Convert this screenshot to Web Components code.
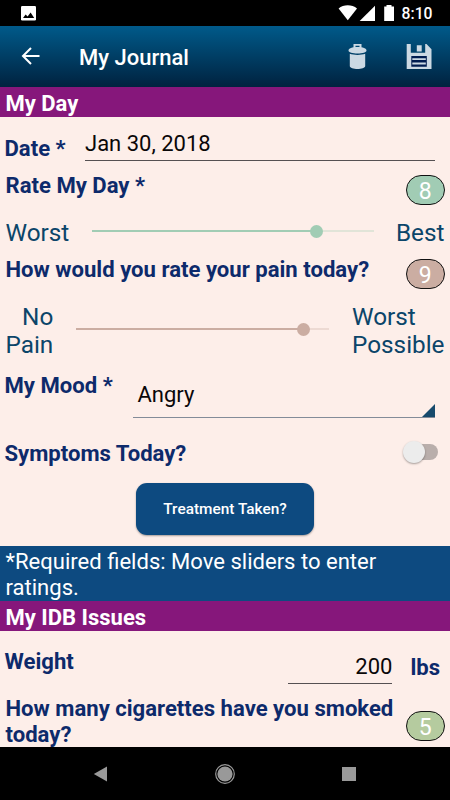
<!DOCTYPE html>
<html lang="en">
<head>
<meta charset="utf-8">
<title>My Journal</title>
<style>
    body {
        margin: 0;
        width: 450px;
        height: 800px;
        overflow: hidden;
        background: #000;
        font-family: Roboto, sans-serif;
    }
</style>
</head>
<body>
<journal-screen></journal-screen>

<script>
function define(name, html) {
    const template = document.createElement('template')
    template.innerHTML = html
    customElements.define(name, class extends HTMLElement {
        constructor() {
            super()
            this.attachShadow({ mode: 'open' })
            this.shadowRoot.appendChild(template.content.cloneNode(true))
        }
    })
}

define('status-bar', `
    <style>
        :host {
            display: flex;
            align-items: center;
            box-sizing: border-box;
            height: 26px;
            padding: 0 17.500px 0 21px;
            background: #000;
            color: #fff;
            font-size: 15.700px;
            font-weight: 500;
        }
        svg { display: block; fill: #fff; }
        .right { display: flex; align-items: center; margin-left: auto; }
        .time { line-height: 26px; padding-top: 2px; margin-left: 8px; }
    </style>
    <svg width="15" height="15" viewBox="0 0 15 15">
        <rect width="15" height="14.500" rx="1.200"/>
        <path d="M2 12l2.600-3.600 2 2 3-3.900 3.600 5.500z" fill="#000"/>
    </svg>
    <div class="right">
        <svg width="56" height="18" viewBox="0 0 56 18">
            <path d="M.6 4.400C5.500 .2 14 .2 19 4.400L9.800 16.300z"/>
            <path d="M37 1.700V17H21.700z"/>
            <path d="M48.500 1h5v1.600H56V17H46.200V2.600h2.300z"/>
        </svg>
        <span class="time">8:10</span>
    </div>
`)

define('app-bar', `
    <style>
        :host {
            display: flex;
            align-items: center;
            box-sizing: border-box;
            height: 61px;
            padding: 0 18px 0 21px;
            background: linear-gradient(#005a8a, #00223f);
            color: #fff;
        }
        svg { display: block; }
        .title { margin-left: 39px; font-size: 22px; font-weight: 500; line-height: 30px; padding-top: 3px; }
        .actions { display: flex; gap: 39px; margin-left: auto; fill: #ccd9e3; }
    </style>
    <svg width="19" height="18" viewBox="0 0 19 18" fill="none" stroke="#fff" stroke-width="2">
        <path d="M18.500 9H2M10 1L2 9l8 8"/>
    </svg>
    <span class="title"><slot></slot></span>
    <div class="actions">
        <svg width="19" height="27" viewBox="0 0 19 27">
            <path d="M5.500 5V1h8v4h-2V2.800h-4V5z"/>
            <path d="M.500 7.500C.500 5.500 4 4 9.500 4s9 1.500 9 3.500c0 1.800-4 3-9 3s-9-1.200-9-3z"/>
            <path d="M1.800 10.800c4 1.500 11.400 1.500 15.400 0V23c0 4-15.400 4-15.400 0z"/>
        </svg>
        <svg width="26" height="27" viewBox="0 0 26 27">
            <path d="M5 12.500h16V24H5z" fill="#001c50"/>
            <path fill-rule="evenodd" d="M.700 1h4.100v8.800h14.400V1h1.300l5 5.200V26H.700zM5.300 13v10.700h15.500V13z"/>
            <path d="M10.800 2.300h4.900v6.200h-4.900zM6.300 15.200h13.500v1.900H6.300zM6.300 19.500h13.500v1.900H6.300z"/>
        </svg>
    </div>
`)

define('section-header', `
    <style>
        :host {
            display: block;
            height: 30px;
            padding-left: 5.500px;
            background: #86177b;
            color: #fff;
            font-size: 22px;
            font-weight: 700;
            line-height: 33px;
            white-space: nowrap;
        }
    </style>
    <slot></slot>
`)

// one form line, children hang from its top edge
define('form-row', `
    <style>
        :host {
            display: flex;
            align-items: flex-start;
            justify-content: space-between;
            box-sizing: border-box;
            padding: 0 5.500px;
        }
    </style>
    <slot></slot>
`)

define('field-label', `
    <style>
        :host {
            display: block;
            color: #0d2a6b;
            font-size: 22.100px;
            font-weight: 700;
            line-height: 26px;
            white-space: nowrap;
        }
    </style>
    <slot></slot>
`)

define('line-field', `
    <style>
        :host {
            display: block;
            box-sizing: border-box;
            border-bottom: 1px solid #555052;
            color: #0a0708;
            font-size: 22px;
            line-height: 26px;
            white-space: nowrap;
        }
    </style>
    <slot></slot>
`)

define('mood-select', `
    <style>
        :host {
            display: flex;
            justify-content: space-between;
            align-items: flex-end;
            box-sizing: border-box;
            border-bottom: 1px solid #838b98;
            color: #0a0708;
            font-size: 22px;
            line-height: 26px;
        }
        span { padding: 0 0 9px 5px; }
        svg { display: block; fill: #174a6c; }
    </style>
    <span><slot></slot></span>
    <svg width="13" height="13" viewBox="0 0 13 13"><path d="M13 0v13H0z"/></svg>
`)

define('value-badge', `
    <style>
        :host {
            display: block;
            box-sizing: border-box;
            width: 38.500px;
            height: 30px;
            border: 1.200px solid #111;
            border-radius: 15px;
            background: var(--tone);
            color: #fff;
            font-size: 23px;
            line-height: 31px;
            text-align: center;
        }
    </style>
    <slot></slot>
`)

define('scale-label', `
    <style>
        :host {
            display: block;
            color: #0b4569;
            font-size: 24.300px;
            line-height: 28px;
            white-space: nowrap;
        }
    </style>
    <slot></slot>
`)

define('rating-slider', `
    <style>
        :host { display: flex; align-items: center; height: 14px; }
        .done { width: var(--done); height: 2px; background: var(--tone); }
        .thumb { width: 13px; height: 13px; margin: 0 -1px; border-radius: 50%; background: var(--tone); }
        .rest { flex: 1; height: 2px; background: var(--tone); opacity: .3; }
    </style>
    <div class="done"></div>
    <div class="thumb"></div>
    <div class="rest"></div>
`)

define('toggle-switch', `
    <style>
        :host { display: flex; align-items: center; width: 35px; height: 22px; }
        .thumb {
            width: 22px;
            height: 22px;
            border-radius: 50%;
            background: #ececec;
            box-shadow: 0 1px 2px rgba(0, 0, 0, .35);
            z-index: 1;
        }
        .track { width: 24px; height: 16px; margin-left: -11px; border-radius: 0 8px 8px 0; background: #b9aeab; }
    </style>
    <div class="thumb"></div>
    <div class="track"></div>
`)

define('action-button', `
    <style>
        :host {
            display: block;
            width: 178.500px;
            height: 52px;
            border-radius: 11px;
            background: #0d4a80;
            box-shadow: 0 1px 2px rgba(0, 0, 0, .35);
            color: #fff;
            font-size: 15.400px;
            font-weight: 500;
            line-height: 53px;
            text-align: center;
        }
    </style>
    <slot></slot>
`)

define('info-note', `
    <style>
        :host {
            display: block;
            box-sizing: border-box;
            height: 55px;
            padding: 3px 5.500px 0;
            background: #0d4a80;
            color: #fff;
            font-size: 22.050px;
            line-height: 26px;
            white-space: nowrap;
        }
    </style>
    <slot></slot>
`)

define('nav-bar', `
    <style>
        :host {
            display: flex;
            align-items: center;
            justify-content: space-between;
            box-sizing: border-box;
            height: 53px;
            padding: 0 94px 0 93px;
            background: #000;
        }
        svg { display: block; fill: #999; }
    </style>
    <svg width="14" height="16" viewBox="0 0 14 16"><path d="M14 .5v15L.8 8z"/></svg>
    <svg width="20" height="20" viewBox="0 0 20 20">
        <circle cx="10" cy="10" r="9.300" fill="none" stroke="#999" stroke-width="1.200"/>
        <circle cx="10" cy="10" r="7.600"/>
    </svg>
    <svg width="14" height="14" viewBox="0 0 14 14"><rect width="14" height="14"/></svg>
`)

define('journal-screen', `
    <style>
        :host { display: flex; flex-direction: column; width: 450px; height: 800px; }
        .form { height: 661px; background: #fdeee9; overflow: hidden; }
        .date { height: 52px; }
        .date field-label { padding-top: 18px; margin-left: -1px; }
        .date line-field { width: 350px; height: 44px; padding-top: 14px; margin-right: 9.500px; }
        .day { height: 48px; padding-top: 6px; --tone: #a1ccb4; }
        .day field-label { margin-top: -3px; }
        .day-scale { height: 39px; padding-top: 2px; --tone: #a1ccb4; }
        .day-scale rating-slider { width: 282px; margin: 5.500px 0 0 .500px; --done: 219px; }
        .pain { height: 45px; padding-top: 3px; --tone: #cbada2; }
        .pain field-label { margin-top: -3px; }
        .pain-scale { height: 66px; padding-top: 2px; --tone: #cbada2; }
        .pain-scale rating-slider { width: 253px; margin-top: 19.500px; --done: 222px; }
        .low { text-align: right; }
        .mood { height: 63px; }
        .mood field-label { padding-top: 5px; margin-left: -1px; }
        .mood mood-select { width: 302.500px; height: 51px; margin-right: 9.500px; }
        .symptoms { height: 53px; padding-top: 10px; }
        .symptoms field-label { margin-left: -1px; }
        .symptoms toggle-switch { margin: 1.500px 6.500px 0 0; }
        .treatment { height: 63px; justify-content: center; }
        .weight { height: 63px; }
        .weight field-label { padding-top: 17px; margin-left: -1px; }
        .amount { display: flex; gap: 18px; margin-right: 4.500px; }
        .amount line-field { width: 104px; height: 53px; padding-top: 23px; text-align: right; }
        .weight .amount field-label { padding-top: 23px; margin: 0; }
        .cigarettes { height: 54px; padding-top: 1px; --tone: #b5cb9f; }
        .cigarettes value-badge { margin-top: 16px; }
    </style>
    <status-bar></status-bar>
    <app-bar>My Journal</app-bar>
    <div class="form">
        <section-header>My Day</section-header>
        <form-row class="date">
            <field-label>Date *</field-label>
            <line-field>Jan 30, 2018</line-field>
        </form-row>
        <form-row class="day">
            <field-label>Rate My Day *</field-label>
            <value-badge>8</value-badge>
        </form-row>
        <form-row class="day-scale">
            <scale-label>Worst</scale-label>
            <rating-slider></rating-slider>
            <scale-label>Best</scale-label>
        </form-row>
        <form-row class="pain">
            <field-label>How would you rate your pain today?</field-label>
            <value-badge>9</value-badge>
        </form-row>
        <form-row class="pain-scale">
            <scale-label class="low">No<br>Pain</scale-label>
            <rating-slider></rating-slider>
            <scale-label>Worst<br>Possible</scale-label>
        </form-row>
        <form-row class="mood">
            <field-label>My Mood *</field-label>
            <mood-select>Angry</mood-select>
        </form-row>
        <form-row class="symptoms">
            <field-label>Symptoms Today?</field-label>
            <toggle-switch></toggle-switch>
        </form-row>
        <form-row class="treatment">
            <action-button>Treatment Taken?</action-button>
        </form-row>
        <info-note>*Required fields: Move sliders to enter<br>ratings.</info-note>
        <section-header>My IDB Issues</section-header>
        <form-row class="weight">
            <field-label>Weight</field-label>
            <div class="amount">
                <line-field>200</line-field>
                <field-label>lbs</field-label>
            </div>
        </form-row>
        <form-row class="cigarettes">
            <field-label>How many cigarettes have you smoked<br>today?</field-label>
            <value-badge>5</value-badge>
        </form-row>
    </div>
    <nav-bar></nav-bar>
`)
</script>
</body>
</html>
